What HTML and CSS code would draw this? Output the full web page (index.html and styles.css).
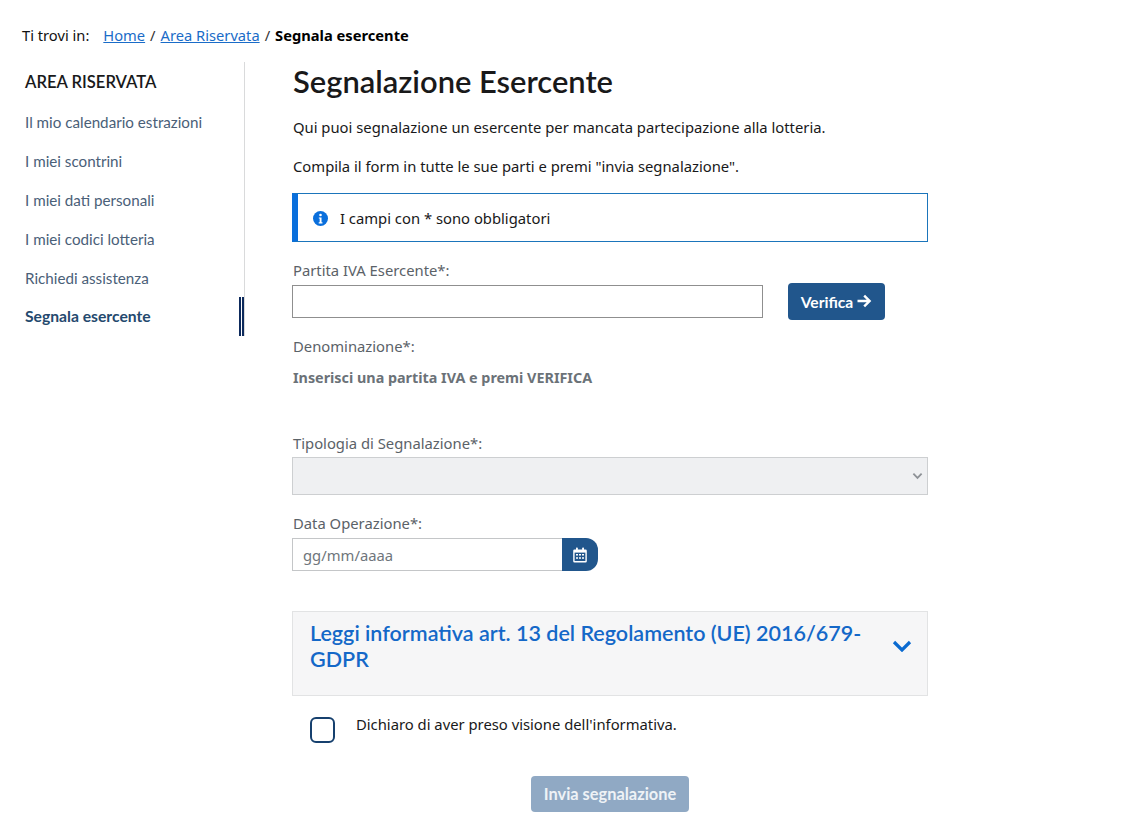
FILE: index.html
```html
<!DOCTYPE html>
<html lang="it">
<head>
<meta charset="utf-8">
<title>Segnalazione Esercente</title>
<link rel="stylesheet" href="styles.css">
</head>
<body>
<nav class="crumbs"><span class="crumbs-label">Ti trovi in:</span><a href="#">Home</a><span class="sep">/</span><a href="#">Area Riservata</a><span class="sep">/</span><strong>Segnala esercente</strong></nav>
<div class="layout">
  <aside class="side">
    <h2 class="side-title">AREA RISERVATA</h2>
    <ul class="side-list">
      <li><a href="#">Il mio calendario estrazioni</a></li>
      <li><a href="#">I miei scontrini</a></li>
      <li><a href="#">I miei dati personali</a></li>
      <li><a href="#">I miei codici lotteria</a></li>
      <li><a href="#">Richiedi assistenza</a></li>
      <li class="active"><a href="#">Segnala esercente</a></li>
    </ul>
  </aside>
  <main class="main">
    <h1 class="title">Segnalazione Esercente</h1>
    <p class="intro">Qui puoi segnalazione un esercente per mancata partecipazione alla lotteria.</p>
    <p class="intro">Compila il form in tutte le sue parti e premi "invia segnalazione".</p>
    <div class="alert">
      <svg class="alert-icon" viewBox="0 0 16 16" width="15" height="15"><circle cx="8" cy="8" r="8" fill="#0a6fdc"/><circle cx="8" cy="4.2" r="1.4" fill="#fff"/><path d="M6.2 6.8h2.9v5.2h1v1.3H6.1V12h1V8.1h-.9z" fill="#fff"/></svg>
      <span>I campi con * sono obbligatori</span>
    </div>
    <label class="lbl lbl-piva">Partita IVA Esercente*:</label>
    <div class="piva-row">
      <input class="piva" type="text">
      <button class="btn btn-verify" type="button"><span class="btn-label">Verifica</span>
        <svg viewBox="0 0 16 16" width="16" height="16"><path d="M1.5 8h12M8.2 2.6 13.6 8l-5.4 5.4" fill="none" stroke="#fff" stroke-width="2.4"/></svg>
      </button>
    </div>
    <div class="lbl lbl-den">Denominazione*:</div>
    <div class="den-val">Inserisci una partita IVA e premi VERIFICA</div>
    <label class="lbl lbl-tip">Tipologia di Segnalazione*:</label>
    <div class="select">
      <svg viewBox="0 0 12 8" width="11" height="8"><path d="M1.5 1.5 6 6l4.5-4.5" fill="none" stroke="#8e9297" stroke-width="2"/></svg>
    </div>
    <label class="lbl lbl-date">Data Operazione*:</label>
    <div class="date-row">
      <input class="date" type="text" placeholder="gg/mm/aaaa">
      <button class="date-btn" type="button" aria-label="Calendario">
        <svg viewBox="0 0 14 16" width="14" height="16"><path d="M1.5 2.5h11a1.3 1.3 0 0 1 1.3 1.3v10.4a1.3 1.3 0 0 1-1.3 1.3h-11A1.3 1.3 0 0 1 .2 14.2V3.8a1.3 1.3 0 0 1 1.3-1.3z" fill="#fff"/><rect x="3" y=".6" width="1.8" height="3.2" rx=".6" fill="#fff"/><rect x="9.2" y=".6" width="1.8" height="3.2" rx=".6" fill="#fff"/><rect x="1.6" y="5.6" width="10.8" height="8.4" fill="#21568c"/><path d="M3 7h2v1.6H3zM6 7h2v1.6H6zM9 7h2v1.6H9zM3 10.2h2v1.6H3zM6 10.2h2v1.6H6zM9 10.2h2v1.6H9z" fill="#fff"/></svg>
      </button>
    </div>
    <div class="accordion">
      <span class="acc-text">Leggi informativa art. 13 del Regolamento (UE) 2016/679-GDPR</span>
      <svg class="acc-icon" viewBox="0 0 20 12" width="20" height="12"><path d="M2 2l8 8 8-8" fill="none" stroke="#0a6ad0" stroke-width="3.2"/></svg>
    </div>
    <div class="check-row">
      <span class="check"></span>
      <span class="check-text">Dichiaro di aver preso visione dell'informativa.</span>
    </div>
    <div class="send-row"><button class="btn btn-off" type="button">Invia segnalazione</button></div>
  </main>
</div>
</body>
</html>
```

FILE: styles.css
```css
* { box-sizing: border-box; }
html, body { margin: 0; padding: 0; }
body {
  background: #fff;
  color: #19191a;
  font-family: "Noto Sans", "Open Sans", sans-serif;
  font-size: 14.8px;
  height: 840px;
  overflow: hidden;
}
.crumbs {
  display: flex;
  align-items: baseline;
  height: 62px;
  padding: 25px 0 0 22px;
  font-size: 14.7px;
  line-height: 20px;
  color: #111;
}
.crumbs-label { margin-right: 14px; }
.crumbs a { color: #1a6cc8; }
.crumbs .sep { margin: 0 5px; color: #333; }
.crumbs strong { font-weight: 700; color: #000; }
.layout { display: flex; align-items: flex-start; }
.side { width: 245px; margin-right: 47px; }
.side-title {
  margin: 0;
  padding: 9px 0 0 25px;
  height: 40px;
  font: 600 16.6px/22px "Lato", sans-serif;
  color: #19191a;
  border-right: 1px solid #d9dadb;
}
.side-list {
  list-style: none;
  margin: 0;
  padding: 0;
  border-right: 1px solid #d9dadb;
}
.side-list li { height: 39px; padding: 9px 0 0 25px; }
.side-list a {
  font: 400 15.2px/22px "Lato", sans-serif;
  color: #4a6078;
  text-decoration: none;
}
.side-list .active { border-right: 5px double #0d2a5c; padding-top: 8px; }
.side-list .active a { font-size: 15.7px; font-weight: 700; color: #24496e; }
.main { width: 636px; }
.title {
  margin: 0;
  height: 54px;
  padding-left: 1px;
  font: 600 30.9px/40px "Lato", sans-serif;
  color: #19191a;
}
.intro { margin: 0 0 17px; padding-left: 1px; line-height: 22px; height: 22px; }
.intro + .intro { margin-bottom: 16px; }
.alert {
  display: flex;
  align-items: center;
  height: 49px;
  border: 1px solid #1b75bb;
  border-left: 6px solid #0a6fdc;
  padding-left: 15px;
}
.alert-icon { margin-right: 12px; margin-top: 1px; }
.lbl { display: block; padding-left: 1px; color: #5b6268; line-height: 20px; }
.lbl-piva { margin-top: 18px; margin-bottom: 4px; }
.piva-row { display: flex; align-items: center; height: 34px; }
.piva { width: 471px; height: 33px; border: 1px solid #8f8f8f; background: #fff; margin-right: 25px; padding: 0 8px; }
.btn {
  display: inline-flex;
  align-items: center;
  justify-content: center;
  gap: 3px;
  width: 97px;
  height: 37px;
  border: 0;
  border-radius: 4px;
  background: #21568c;
  color: #fff;
  font: 700 15.6px/20px "Lato", sans-serif;
  padding: 0;
}
.btn-label { position: relative; top: 1px; }
.lbl-den { margin-top: 18px; }
.den-val { margin-top: 12px; padding-left: 1px; font-weight: 700; color: #6b7278; line-height: 20px; font-size: 14.35px; }
.lbl-tip { margin-top: 45px; margin-bottom: 4px; }
.select {
  display: flex;
  justify-content: flex-end;
  align-items: center;
  height: 38px;
  background: #eff0f2;
  border: 1px solid #cdcfd1;
  padding-right: 4px;
}
.lbl-date { margin-top: 18px; margin-bottom: 5px; }
.date-row { display: flex; height: 33px; }
.date {
  width: 270px;
  height: 33px;
  border: 1px solid #c4c6c8;
  border-right: 0;
  padding: 0 10px;
  font: 400 14.8px "Noto Sans", sans-serif;
}
.date::placeholder { color: #6f767c; opacity: 1; }
.date-btn {
  display: flex;
  align-items: center;
  justify-content: center;
  width: 36px;
  height: 33px;
  border: 0;
  padding: 0;
  background: #21568c;
  border-radius: 0 12px 12px 0;
}
.accordion {
  display: flex;
  align-items: flex-start;
  justify-content: space-between;
  height: 85px;
  margin-top: 40px;
  padding: 8px 15px 0 17px;
  background: #f6f6f7;
  border: 1px solid #e2e3e4;
}
.acc-text { width: 570px; font: 600 21.5px/26px "Lato", sans-serif; color: #1468c8; }
.acc-icon { margin-top: 20px; }
.check-row { display: flex; align-items: flex-start; height: 80px; padding: 18px 0 0 18px; }
.check { width: 25px; height: 26px; border: 2px solid #16406e; border-radius: 6px; margin-right: 21px; margin-top: 3px; }
.check-text { line-height: 20px; color: #19191a; }
.send-row { display: flex; justify-content: center; }
.btn-off { width: 158px; height: 36px; background: #90a9c4; color: #eef2f6; font-size: 16.4px; }
```
